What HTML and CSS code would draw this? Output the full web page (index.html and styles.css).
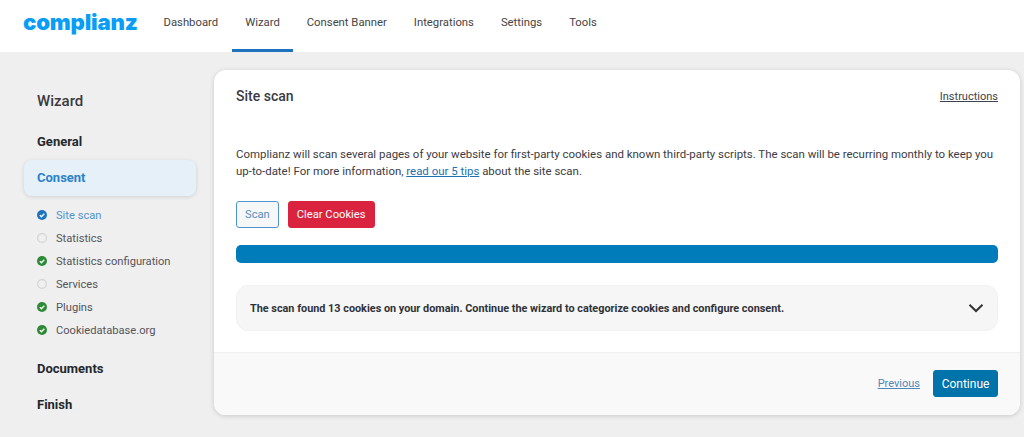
FILE: index.html
```html
<!DOCTYPE html>
<html lang="en">
<head>
<meta charset="utf-8">
<title>Complianz Wizard</title>
<link rel="stylesheet" href="styles.css">
</head>
<body>
<header class="topbar">
  <div class="logo">complianz</div>
  <nav class="tabs">
    <a class="tab">Dashboard</a>
    <a class="tab active">Wizard</a>
    <a class="tab">Consent Banner</a>
    <a class="tab">Integrations</a>
    <a class="tab">Settings</a>
    <a class="tab">Tools</a>
  </nav>
</header>
<main class="layout">
  <aside class="sidebar">
    <h2 class="side-title">Wizard</h2>
    <div class="step">General</div>
    <div class="step current">Consent</div>
    <ul class="substeps">
      <li class="sub sub-active"><svg class="dot" viewBox="0 0 10 10"><circle cx="5" cy="5" r="5" fill="#1e73be"/><path d="M2.8 5.1 4.4 6.7 7.3 3.7" fill="none" stroke="#fff" stroke-width="1.3"/></svg>Site scan</li>
      <li class="sub"><svg class="dot" viewBox="0 0 10 10"><circle cx="5" cy="5" r="4.4" fill="none" stroke="#d4d4d4" stroke-width="1.2"/></svg>Statistics</li>
      <li class="sub"><svg class="dot" viewBox="0 0 10 10"><circle cx="5" cy="5" r="5" fill="#2e8a37"/><path d="M2.8 5.1 4.4 6.7 7.3 3.7" fill="none" stroke="#fff" stroke-width="1.3"/></svg>Statistics configuration</li>
      <li class="sub"><svg class="dot" viewBox="0 0 10 10"><circle cx="5" cy="5" r="4.4" fill="none" stroke="#d4d4d4" stroke-width="1.2"/></svg>Services</li>
      <li class="sub"><svg class="dot" viewBox="0 0 10 10"><circle cx="5" cy="5" r="5" fill="#2e8a37"/><path d="M2.8 5.1 4.4 6.7 7.3 3.7" fill="none" stroke="#fff" stroke-width="1.3"/></svg>Plugins</li>
      <li class="sub"><svg class="dot" viewBox="0 0 10 10"><circle cx="5" cy="5" r="5" fill="#2e8a37"/><path d="M2.8 5.1 4.4 6.7 7.3 3.7" fill="none" stroke="#fff" stroke-width="1.3"/></svg>Cookiedatabase.org</li>
    </ul>
    <div class="step">Documents</div>
    <div class="step">Finish</div>
  </aside>
  <section class="card">
    <div class="card-head">
      <h1 class="card-title">Site scan</h1>
      <a class="instructions">Instructions</a>
    </div>
    <div class="card-body">
      <p class="intro">Complianz will scan several pages of your website for first-party cookies and known third-party scripts. The scan will be recurring monthly to keep you up-to-date! For more information, <a class="link">read our 5 tips</a> about the site scan.</p>
      <div class="actions">
        <button class="btn btn-outline">Scan</button>
        <button class="btn btn-danger">Clear Cookies</button>
      </div>
      <div class="progress"></div>
      <div class="notice">
        <span class="notice-text">The scan found 13 cookies on your domain. Continue the wizard to categorize cookies and configure consent.</span>
        <svg class="chevron" viewBox="0 0 16 10"><path d="M1.5 1.8 8 8 14.500 1.800" fill="none" stroke="#333" stroke-width="2"/></svg>
      </div>
    </div>
    <div class="card-foot">
      <a class="prev">Previous</a>
      <button class="btn btn-primary">Continue</button>
    </div>
  </section>
</main>
</body>
</html>
```
FILE: styles.css
```css
* { box-sizing: border-box; }
html, body { margin: 0; height: 100%; }
body {
  background: #efefef;
  font-family: "Roboto", "Noto Sans", sans-serif;
  font-size: 11.3px;
  color: #3c3c44;
  overflow: hidden;
}
.topbar {
  height: 52px;
  background: #fff;
  display: flex;
  align-items: stretch;
  padding-left: 23px;
}
.logo {
  width: 127px;
  font-family: "Inter", sans-serif;
  font-weight: 900;
  font-size: 22.2px;
  letter-spacing: -0.2px;
  line-height: 44px;
  color: #0a9df5;
  white-space: nowrap;
}
.tabs { display: flex; }
.tab {
  display: flex;
  align-items: center;
  padding: 0 13.500px 5px;
  height: 52px;
  color: #444;
  border-bottom: 3px solid transparent;
}
.tab.active { border-bottom-color: #1e73be; }
.layout {
  display: flex;
  align-items: flex-start;
  padding: 18px 4px 0 24px;
  gap: 18px;
}
.sidebar { width: 172px; flex: none; }
.side-title {
  margin: 0;
  padding: 21px 13px 0;
  font-size: 15px;
  line-height: 20px;
  font-weight: 500;
  height: 54px;
  color: #3a3a42;
}
.step {
  height: 36px;
  padding: 0 13px;
  line-height: 36px;
  font-size: 13px;
  font-weight: 700;
  color: #23282d;
}
.step.current {
  background: #e6f0f9;
  color: #2b82c9;
  border-radius: 8px;
  box-shadow: 0 1px 4px rgba(0, 0, 0, .13);
}
.substeps { list-style: none; margin: 8px 0 9px; padding: 0 0 0 13px; }
.sub {
  display: flex;
  align-items: center;
  height: 23px;
  gap: 9px;
  color: #54545c;
  font-size: 11.15px;
}
.sub-active { color: #4f94cf; }
.dot { width: 10px; height: 10px; flex: none; margin-top: -2px; }
.card {
  flex: 1;
  height: 345px;
  background: #fff;
  border-radius: 12px;
  box-shadow: 0 1px 5px rgba(0, 0, 0, .16);
  display: flex;
  flex-direction: column;
  overflow: hidden;
}
.card-head {
  display: flex;
  justify-content: space-between;
  align-items: center;
  padding: 0 22px;
  height: 52px;
}
.card-title { margin: 0; font-size: 14px; font-weight: 500; color: #3a3a42; line-height: 18px; }
.instructions { font-size: 11px; text-decoration: underline; color: #3c434a; }
.card-body { flex: 1; padding: 0 22px; }
.intro { margin: 24px 0 0; line-height: 17px; font-size: 11.45px; color: #3c3c44; }
.link { color: #2271b1; text-decoration: underline; }
.actions { display: flex; gap: 9px; margin-top: 21px; }
.btn {
  font-family: inherit;
  font-size: 11.2px;
  height: 27px;
  border-radius: 3px;
  padding: 0 8px;
  cursor: pointer;
}
.btn-outline { background: #f6f7f7; border: 1px solid #4f94cf; color: #5a8fbd; }
.btn-danger { background: #d9233f; border: 1px solid #d9233f; color: #fff; }
.btn-primary { background: #0073aa; border: 1px solid #0073aa; color: #fff; width: 65px; height: 27px; padding: 0; font-size: 12px; }
.progress { height: 18px; margin-top: 17px; background: #007cba; border-radius: 5px; }
.notice {
  display: flex;
  justify-content: space-between;
  align-items: center;
  height: 46px;
  margin-top: 22px;
  padding: 0 13px 0 13px;
  background: #f6f6f6;
  border: 1px solid #f0f0f0;
  border-radius: 12px;
}
.notice-text { font-size: 10.85px; font-weight: 700; color: #2f3238; }
.chevron { width: 16px; height: 10px; }
.card-foot {
  height: 63px;
  background: #f9f9f9;
  border-top: 1px solid #f0f0f0;
  display: flex;
  justify-content: flex-end;
  align-items: center;
  gap: 13px;
  padding: 0 22px 1px;
}
.prev { font-size: 11px; color: #4f88b8; text-decoration: underline; }
```
